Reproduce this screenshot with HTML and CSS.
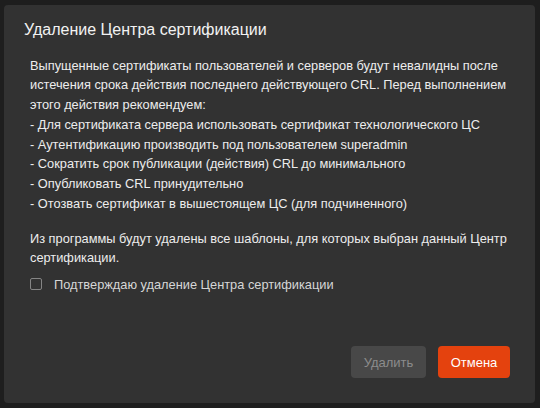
FILE: index.html
```html
<!DOCTYPE html>
<html lang="ru">
<head>
<meta charset="utf-8">
<link rel="stylesheet" href="styles.css">
</head>
<body>
<div class="dialog">
  <h1 class="title">Удаление Центра сертификации</h1>
  <div class="content">
    <p class="para">Выпущенные сертификаты пользователей и серверов будут невалидны после истечения срока действия последнего действующего CRL. Перед выполнением этого действия рекомендуем:<br>
- Для сертификата сервера использовать сертификат технологического ЦС<br>
- Аутентификацию производить под пользователем superadmin<br>
- Сократить срок публикации (действия) CRL до минимального<br>
- Опубликовать CRL принудительно<br>
- Отозвать сертификат в вышестоящем ЦС (для подчиненного)</p>
    <p class="para para-last">Из программы будут удалены все шаблоны, для которых выбран данный Центр сертификации.</p>
    <label class="check">
      <span class="box"></span>
      <span class="check-label">Подтверждаю удаление Центра сертификации</span>
    </label>
  </div>
  <div class="actions">
    <button class="btn btn-disabled">Удалить</button>
    <button class="btn btn-primary">Отмена</button>
  </div>
</div>
</body>
</html>
```
FILE: styles.css
```css
html, body {
  margin: 0;
  padding: 0;
  background: #1e1e1e;
  width: 540px;
  height: 408px;
  overflow: hidden;
}
body {
  padding: 5px 0 0 4px;
  box-sizing: border-box;
  font-family: "Liberation Sans", Arial, sans-serif;
}
.dialog {
  width: 531px;
  height: 398px;
  box-sizing: border-box;
  background: #323232;
  border-radius: 4px;
  display: flex;
  flex-direction: column;
  padding: 14px 25px 25px 20px;
}
.title {
  margin: 0;
  font-size: 16px;
  font-weight: normal;
  color: #f2f2f2;
  line-height: 22px;
}
.content {
  padding: 14.7px 0 0 6px;
  flex: 1;
}
.para {
  margin: 0 0 15.3px 0;
  font-size: 12.8px;
  line-height: 19.7px;
  color: #ededed;
}
.para-last {
  margin-bottom: 8px;
}
.check {
  display: flex;
  align-items: center;
  gap: 12px;
  height: 16px;
}
.box {
  width: 10px;
  height: 10px;
  border: 1.5px solid #858585;
  border-radius: 2px;
}
.check-label {
  font-size: 12.8px;
  color: #d6d6d6;
}
.actions {
  display: flex;
  justify-content: flex-end;
  gap: 12px;
}
.btn {
  height: 32px;
  border: none;
  border-radius: 4px;
  font-family: "Liberation Sans", Arial, sans-serif;
  font-size: 13px;
  padding: 0;
}
.btn-disabled {
  background: #484848;
  color: #8c8c8c;
  width: 75px;
}
.btn-primary {
  background: #e4420e;
  color: #ffffff;
  width: 72px;
}
```
